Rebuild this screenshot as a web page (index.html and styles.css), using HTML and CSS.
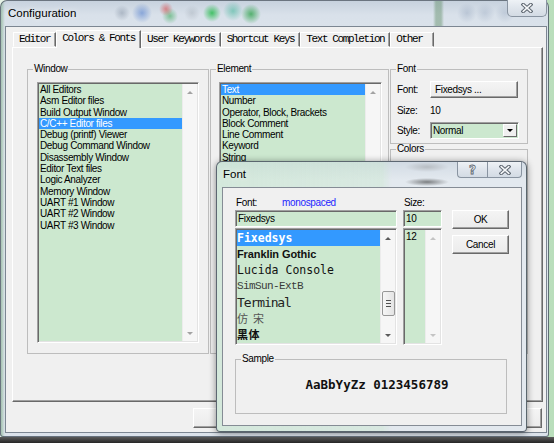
FILE: index.html
```html
<!DOCTYPE html>
<html>
<head>
<meta charset="utf-8">
<title>Configuration</title>
<link rel="stylesheet" href="styles.css">
</head>
<body>
<div class="screen">
  <div class="win">
    <div class="titlebar">
      <span class="title">Configuration</span>
      <span class="capbtn cap-close-main">
        <svg width="12" height="10" viewBox="0 0 12 10"><path d="M2.2 1.6 L9.8 8.4 M9.8 1.6 L2.2 8.4" stroke="#5d6670" stroke-width="3.6" stroke-linecap="square" fill="none"/><path d="M2.2 1.6 L9.8 8.4 M9.8 1.6 L2.2 8.4" stroke="#f7f9fb" stroke-width="1.5" stroke-linecap="square" fill="none"/></svg>
      </span>
    </div>
    <div class="client">
      <div class="tabs">
        <span class="tab">Editor</span>
        <span class="tab sel">Colors &amp; Fonts</span>
        <span class="tab">User Keywords</span>
        <span class="tab">Shortcut Keys</span>
        <span class="tab">Text Completion</span>
        <span class="tab">Other&nbsp;</span>
      </div>
      <div class="panel">
        <fieldset class="grp g-window">
          <legend>Window</legend>
          <div class="gbody gb-window">
            <div class="listbox lb-window">
              <ul class="items">
                <li>All Editors</li>
                <li>Asm Editor files</li>
                <li>Build Output Window</li>
                <li class="sel">C/C++ Editor files</li>
                <li>Debug (printf) Viewer</li>
                <li>Debug Command Window</li>
                <li>Disassembly Window</li>
                <li>Editor Text files</li>
                <li>Logic Analyzer</li>
                <li>Memory Window</li>
                <li>UART #1 Window</li>
                <li>UART #2 Window</li>
                <li>UART #3 Window</li>
              </ul>
              <div class="vscroll dis"><span class="arr up"></span><span class="arr dn"></span></div>
            </div>
          </div>
        </fieldset>
        <fieldset class="grp g-element">
          <legend>Element</legend>
          <div class="gbody gb-element">
            <div class="listbox lb-element">
              <ul class="items">
                <li class="sel">Text</li>
                <li>Number</li>
                <li>Operator, Block, Brackets</li>
                <li>Block Comment</li>
                <li>Line Comment</li>
                <li>Keyword</li>
                <li>String</li>
              </ul>
              <div class="vscroll dis"><span class="arr up"></span><span class="arr dn"></span></div>
            </div>
          </div>
        </fieldset>
        <div class="fontcol">
          <fieldset class="grp g-font">
            <legend>Font</legend>
            <div class="gbody gb-font">
              <span class="lbl">Font:</span>
              <button class="btn btn-font">Fixedsys ...</button>
              <span class="lbl">Size:</span>
              <span class="lbl">10</span>
              <span class="lbl">Style:</span>
              <div class="combo"><span class="combo-val">Normal</span><span class="combo-dd"><span class="tri"></span></span></div>
            </div>
          </fieldset>
          <fieldset class="grp g-colors">
            <legend>Colors</legend>
          </fieldset>
        </div>
      </div>
      <div class="btnrow">
        <span class="btn btn-main"></span>
        <span class="btn btn-main"></span>
        <span class="btn btn-main"></span>
      </div>
    </div>
  </div>

  <div class="fontdlg">
    <div class="dlg-title">
      <span class="dt">Font</span>
      <div class="dcap">
        <span class="capbtn cap-help">?</span>
        <span class="capbtn cap-close-dlg">
          <svg width="12" height="10" viewBox="0 0 12 10"><path d="M2.2 1.6 L9.8 8.4 M9.8 1.6 L2.2 8.4" stroke="#5d6670" stroke-width="3.6" stroke-linecap="square" fill="none"/><path d="M2.2 1.6 L9.8 8.4 M9.8 1.6 L2.2 8.4" stroke="#f7f9fb" stroke-width="1.5" stroke-linecap="square" fill="none"/></svg>
        </span>
      </div>
    </div>
    <div class="dlg-client">
      <div class="fd-grid">
        <div class="fd-lbl"><span>Font:</span><span class="mono-note">monospaced</span></div>
        <div class="fd-lbl">Size:</div>
        <div class="edit fd-name">Fixedsys</div>
        <div class="edit fd-size">10</div>
        <div class="fd-btns">
          <button class="btn btn-dlg">OK</button>
          <button class="btn btn-dlg">Cancel</button>
        </div>
        <div class="listbox lb-fonts">
          <ul class="fitems">
            <li class="sel f-fixedsys">Fixedsys</li>
            <li class="f-franklin">Franklin Gothic</li>
            <li class="f-lucida">Lucida Console</li>
            <li class="f-simsun">SimSun-ExtB</li>
            <li class="f-terminal">Terminal</li>
            <li class="f-fangsong">仿宋</li>
            <li class="f-heiti">黑体</li>
          </ul>
          <div class="vscroll act">
            <span class="arr up"></span>
            <span class="thumb"><i></i><i></i><i></i></span>
            <span class="arr dn"></span>
          </div>
        </div>
        <div class="listbox lb-sizes">
          <ul class="sitems"><li>12</li></ul>
          <div class="vscroll dis light"><span class="arr up"></span><span class="arr dn"></span></div>
        </div>
      </div>
      <fieldset class="grp g-sample">
        <legend>Sample</legend>
        <div class="sample">AaBbYyZz 0123456789</div>
      </fieldset>
    </div>
  </div>
</div>
</body>
</html>
```

FILE: styles.css
```css
* { box-sizing: border-box; }
html, body { margin: 0; padding: 0; }
body { width: 554px; height: 443px; overflow: hidden; }

.screen {
  position: relative;
  width: 554px;
  height: 443px;
  font-family: "Liberation Sans", Arial, sans-serif;
  font-size: 10px;
  letter-spacing: -0.35px;
  color: #000;
  background:
    linear-gradient(to bottom, transparent 437px, #5a5a5a 437px, #262626 443px),
    linear-gradient(to right, #e7f3e7, #b9debb);
}

/* ---------- main window ---------- */
.win {
  width: 549px;
  height: 437px;
  display: flex;
  flex-direction: column;
  border: 1px solid rgba(70, 80, 92, 0.75);
  border-radius: 7px 7px 3px 3px;
  padding: 0 1px 3px 4px;
  background:
    linear-gradient(to right, rgba(120, 170, 130, 0.55) 0, rgba(120, 170, 130, 0) 4px),
    linear-gradient(to bottom, #c7d2de 0, #d9e1ea 14px, #dfe6ed 40%, #dbe2ea 100%);
}

.titlebar {
  height: 25px;
  flex: none;
  display: flex;
  justify-content: space-between;
  align-items: flex-start;
  padding-left: 3px;
  background:
    radial-gradient(circle at 117px 12px, rgba(110, 125, 145, 0.4) 0, rgba(110, 125, 145, 0) 8px),
    radial-gradient(circle at 137px 12px, rgba(60, 110, 200, 0.5) 0, rgba(60, 110, 200, 0) 10px),
    radial-gradient(circle at 161px 8px, rgba(215, 60, 60, 0.55) 0, rgba(215, 60, 60, 0) 7px),
    radial-gradient(circle at 165px 15px, rgba(50, 165, 80, 0.55) 0, rgba(50, 165, 80, 0) 8px),
    radial-gradient(circle at 187px 12px, rgba(140, 150, 160, 0.3) 0, rgba(140, 150, 160, 0) 8px),
    radial-gradient(circle at 207px 12px, rgba(30, 185, 70, 0.8) 0, rgba(30, 185, 70, 0) 9px),
    radial-gradient(circle at 228px 10px, rgba(60, 180, 150, 0.55) 0, rgba(60, 180, 150, 0) 10px),
    radial-gradient(circle at 246px 13px, rgba(40, 160, 70, 0.75) 0, rgba(40, 160, 70, 0) 10px),
    radial-gradient(circle at 462px 12px, rgba(120, 140, 170, 0.3) 0, rgba(120, 140, 170, 0) 10px),
    radial-gradient(circle at 480px 12px, rgba(120, 140, 170, 0.25) 0, rgba(120, 140, 170, 0) 10px),
    radial-gradient(circle at 500px 12px, rgba(120, 140, 170, 0.25) 0, rgba(120, 140, 170, 0) 10px),
    linear-gradient(to right, transparent 428px, rgba(80, 130, 85, 0.4) 431px, rgba(80, 130, 85, 0.4) 436px, transparent 439px);
}
.title {
  font-family: "Liberation Sans", Arial, sans-serif;
  font-size: 11.5px;
  letter-spacing: 0;
  line-height: 24px;
  color: #000;
  text-shadow: 0 0 6px rgba(255, 255, 255, 0.9);
}

.capbtn {
  display: flex;
  align-items: center;
  justify-content: center;
  background: linear-gradient(to bottom, #eef2f6 0, #dfe5ec 50%, #d3dbe4 100%);
  border: 1px solid #8994a1;
  border-top: none;
}
.cap-close-main {
  width: 40px;
  height: 17px;
  margin-top: -1px;
  border-radius: 0 0 5px 5px;
}

.client {
  flex: 1;
  border: 1px solid #7c8692;
  background: #f0f0f0;
  display: flex;
  flex-direction: column;
}

/* ---------- tabs ---------- */
.tabs {
  display: flex;
  align-items: flex-end;
  height: 20px;
  padding: 3px 0 0 7px;
}
.tab {
  height: 15px;
  padding: 0 5px;
  border: 1px solid;
  border-color: #ffffff #696969 transparent #ffffff;
  box-shadow: inset -1px 0 #a0a0a0;
  font-family: "Liberation Mono", "Courier New", monospace;
  font-size: 11px;
  letter-spacing: -1.4px;
  line-height: 13px;
  white-space: nowrap;
  background: #f0f0f0;
}
.tab.sel {
  height: 18px;
  margin-bottom: -1px;
  position: relative;
  z-index: 1;
  border-bottom: none;
  line-height: 15px;
}

.panel {
  height: 355px;
  margin: 0 3px 0 6px;
  border: 1px solid;
  border-color: #ffffff #696969 #696969 #ffffff;
  box-shadow: inset -1px -1px #a0a0a0;
  padding: 15px 0 0 14px;
  display: flex;
  align-items: flex-start;
}

/* ---------- group boxes ---------- */
.grp {
  margin: 0;
  padding: 0;
  min-width: 0;
  border: 1px solid #bdbdbd;
}
.grp legend {
  margin-left: 5px;
  padding: 0 1px;
  line-height: 12px;
  font-size: 10px;
}
.g-window { width: 182px; height: 291px; }
.gb-window { padding: 7px 0 0 9px; }
.g-element { width: 179px; height: 291px; margin-left: 1px; }
.gb-element { padding: 7px 0 0 8px; }

.fontcol { width: 138px; margin-left: 1px; display: flex; flex-direction: column; }
.g-font { height: 81px; }
.gb-font {
  padding: 6px 0 0 6px;
  display: grid;
  grid-template-columns: 33px 89px;
  grid-template-rows: 17px 16px 17px;
  row-gap: 4px;
  align-items: center;
}
.g-colors { height: 211px; margin-top: -1px; }

.lbl { white-space: nowrap; }

/* ---------- buttons ---------- */
.btn {
  font-family: "Liberation Sans", Arial, sans-serif;
  font-size: 10px;
  letter-spacing: -0.35px;
  color: #000;
  background: linear-gradient(to bottom, #f4f4f4, #ebebeb);
  border: 1px solid;
  border-color: #ffffff #696969 #696969 #ffffff;
  box-shadow: inset -1px -1px #a0a0a0;
  padding: 0;
  margin: 0;
}
.btn-font { height: 17px; width: 88px; text-align: left; padding-left: 4px; }

.combo {
  height: 17px;
  width: 89px;
  display: flex;
  border: 1px solid;
  border-color: #a0a0a0 #ffffff #ffffff #a0a0a0;
  box-shadow: inset 1px 1px #696969;
  padding: 1px;
  background: #cce8cf;
}
.combo-val { flex: 1; line-height: 13px; padding-left: 1px; }
.combo-dd {
  width: 14px;
  display: flex;
  align-items: center;
  justify-content: center;
  background: #f0f0f0;
  border: 1px solid;
  border-color: #ffffff #696969 #696969 #ffffff;
}
.tri {
  width: 0; height: 0;
  border-left: 3px solid transparent;
  border-right: 3px solid transparent;
  border-top: 3px solid #000;
}

.btnrow {
  display: flex;
  justify-content: space-between;
  margin-top: 6px;
  padding: 0 4px 0 187px;
}
.btn-main { display: block; width: 75px; height: 20px; }

/* ---------- list boxes ---------- */
.listbox {
  display: flex;
  border: 1px solid;
  border-color: #a0a0a0 #ffffff #ffffff #a0a0a0;
  box-shadow: inset 1px 1px #696969, inset -1px -1px #e3e3e3;
  padding: 1px;
  background: #f0f0f0;
}
.lb-window { width: 162px; height: 261px; }
.lb-element { width: 163px; height: 261px; }

.items {
  flex: 1;
  list-style: none;
  margin: 0;
  padding: 0;
  background: #cce8cf;
  overflow: hidden;
}
.items li {
  height: 11.3px;
  line-height: 11.3px;
  padding-left: 1px;
  white-space: nowrap;
}
.items li.sel, .fitems li.sel { background: #3399ff; color: #fff; }

.vscroll {
  width: 15px;
  display: flex;
  flex-direction: column;
  justify-content: space-between;
  align-items: center;
  background: #f6f6f6;
  border-left: 1px solid #ececec;
}
.arr {
  height: 16px;
  width: 15px;
  display: flex;
  align-items: center;
  justify-content: center;
}
.arr::before {
  content: "";
  width: 0; height: 0;
  border-left: 3px solid transparent;
  border-right: 3px solid transparent;
}
.arr.up::before { border-bottom: 3px solid #a3a3a3; }
.arr.dn::before { border-top: 3px solid #a3a3a3; }
.vscroll.act .arr.up::before { border-bottom-color: #5b5b5b; }
.vscroll.act .arr.dn::before { border-top-color: #5b5b5b; }
.vscroll.light .arr.up::before { border-bottom-color: #c4c4c4; }
.vscroll.light .arr.dn::before { border-top-color: #c4c4c4; }
.vscroll.act { justify-content: flex-start; }
.vscroll.act .arr.dn { margin-top: auto; }
.thumb {
  margin-top: 45px;
  width: 13px;
  height: 25px;
  border: 1px solid #979797;
  border-radius: 2px;
  background: linear-gradient(to right, #f6f6f6, #e4e4e4);
  display: flex;
  flex-direction: column;
  align-items: center;
  justify-content: center;
  gap: 2px;
}
.thumb i { display: block; width: 5px; height: 1px; background: #505050; }

/* ---------- font dialog ---------- */
.fontdlg {
  position: absolute;
  left: 216px;
  top: 161px;
  width: 311px;
  height: 271px;
  display: flex;
  flex-direction: column;
  border: 1px solid rgba(60, 70, 82, 0.8);
  border-radius: 6px 6px 4px 4px;
  padding: 0 4px 5px 5px;
  background:
    linear-gradient(to right, rgba(200, 232, 204, 0.55) 0, rgba(200, 232, 204, 0.4) 165px, rgba(200, 232, 204, 0) 175px),
    linear-gradient(to bottom, #d2dbe4 0, #e3e9ef 18px, #e2e8ee 100%);
  box-shadow: 0 1px 7px rgba(0, 0, 0, 0.45);
}
.dlg-title {
  height: 25px;
  flex: none;
  display: flex;
  justify-content: space-between;
  align-items: flex-start;
  background:
    radial-gradient(ellipse 22px 5px at 205px 5px, rgba(110, 110, 110, 0.3) 0, rgba(110, 110, 110, 0) 100%),
    radial-gradient(ellipse 22px 4px at 205px 20px, rgba(20, 20, 20, 0.5) 0, rgba(20, 20, 20, 0) 100%);
}
.dt {
  font-family: "Liberation Sans", Arial, sans-serif;
  font-size: 11.5px;
  letter-spacing: 0;
  line-height: 25px;
  padding-left: 1px;
  text-shadow: 0 0 6px rgba(255, 255, 255, 0.9);
}
.dcap { display: flex; }
.cap-help {
  width: 30px;
  height: 16px;
  border-radius: 0 0 0 4px;
  border-right: none;
  font-family: "DejaVu Sans", sans-serif;
  font-weight: bold;
  font-size: 12px;
  letter-spacing: 0;
  color: #f7f9fb;
  -webkit-text-stroke: 0.8px #5d6670;
}
.cap-close-dlg {
  width: 35px;
  height: 16px;
  border-radius: 0 0 4px 0;
}

.dlg-client {
  flex: 1;
  border: 1px solid #858c95;
  background: #f0f0f0;
  padding: 9px 0 0 12px;
}
.fd-grid {
  display: grid;
  grid-template-columns: 162px 39px 57px;
  grid-template-rows: 12px 17px 117px;
  column-gap: 6px;
  row-gap: 1px;
}
.fd-lbl { line-height: 12px; white-space: nowrap; padding-left: 1px; }
.fd-lbl .mono-note { margin-left: 25px; color: #2424ff; }
.fd-btns {
  grid-column: 3;
  grid-row: 2 / 4;
  margin-left: 4px;
  display: flex;
  flex-direction: column;
  gap: 6px;
}
.btn-dlg { width: 57px; height: 19px; }

.edit {
  height: 17px;
  border: 1px solid;
  border-color: #a0a0a0 #ffffff #ffffff #a0a0a0;
  box-shadow: inset 1px 1px #696969;
  background: #cce8cf;
  padding-left: 2px;
  line-height: 15px;
}
.fd-name { grid-column: 1; grid-row: 2; }
.fd-size { grid-column: 2; grid-row: 2; }
.lb-fonts { grid-column: 1; grid-row: 3; }
.lb-sizes { grid-column: 2; grid-row: 3; }

.fitems, .sitems {
  flex: 1;
  list-style: none;
  margin: 0;
  padding: 0;
  background: #cce8cf;
  overflow: hidden;
}
.fitems li {
  height: 16.1px;
  line-height: 15px;
  display: flex;
  align-items: center;
  white-space: nowrap;
  padding-left: 0;
}
.sitems li { padding-left: 1px; line-height: 14px; }

.f-fixedsys { font-family: "DejaVu Sans Mono", monospace; font-weight: bold; font-size: 11.5px; letter-spacing: 0; }
.f-franklin { font-family: "Liberation Sans", Arial, sans-serif; font-weight: bold; font-size: 11px; letter-spacing: -0.1px; color: #111; }
.f-lucida { font-family: "DejaVu Sans Mono", monospace; font-size: 11.5px; letter-spacing: 0; color: #111; }
.f-simsun { font-family: "Liberation Mono", monospace; font-size: 11px; letter-spacing: -0.6px; color: #3a3a3a; }
.f-terminal { font-family: "DejaVu Sans Mono", monospace; font-size: 13px; letter-spacing: -1.1px; color: #222; }
.f-fangsong { font-family: "Noto Sans CJK SC", sans-serif; font-weight: 400; font-size: 11px; line-height: 12px; letter-spacing: 5px; color: #555; }
.f-heiti { font-family: "Noto Sans CJK SC", sans-serif; font-weight: 700; font-size: 11px; line-height: 12px; letter-spacing: 0.5px; color: #111; }

.g-sample {
  width: 272px;
  height: 61px;
  margin-top: 8px;
}
.sample {
  padding: 13px 0 0 12px;
  text-align: center;
  font-family: "DejaVu Sans Mono", monospace;
  font-weight: bold;
  font-size: 12.5px;
  letter-spacing: 0;
  line-height: 14px;
  color: #111;
}
```
